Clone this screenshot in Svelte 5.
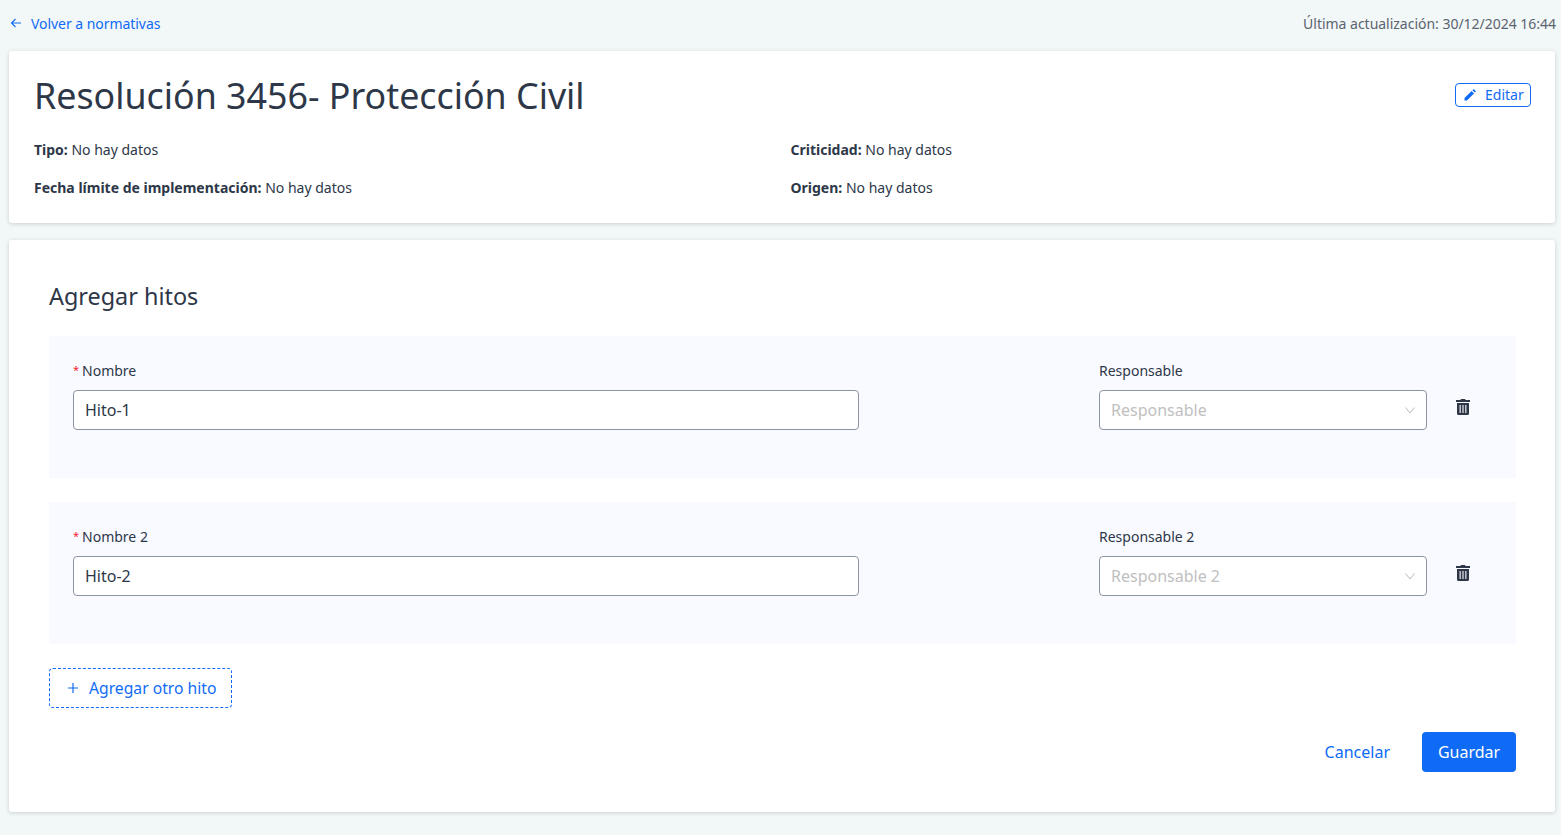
<script>
  // Milestones shown in the form
  let hitos = [
    { nombre: 'Nombre', valor: 'Hito-1', responsable: 'Responsable' },
    { nombre: 'Nombre 2', valor: 'Hito-2', responsable: 'Responsable 2' }
  ];
</script>

<div class="page">
  <div class="topbar">
    <a class="back" href="#top">
      <svg width="12" height="12" viewBox="0 0 12 12" fill="none" stroke="currentColor" stroke-width="1.1">
        <path d="M11 6H1.5M5.5 2L1.5 6l4 4" />
      </svg>
      <span>Volver a normativas</span>
    </a>
    <span class="updated">Última actualización: 30/12/2024 16:44</span>
  </div>

  <section class="card summary">
    <div class="head">
      <h1>Resolución 3456- Protección Civil</h1>
      <button class="edit">
        <svg width="12" height="12" viewBox="0 0 12 12" fill="currentColor">
          <path d="M0.5 11.5V9.1L7.6 2l2.4 2.4-7.1 7.1H.5zM8.4 1.2l.7-.7a.8.8 0 0 1 1.1 0l1.3 1.3a.8.8 0 0 1 0 1.1l-.7.7-2.4-2.4z" />
        </svg>
        Editar
      </button>
    </div>
    <div class="facts">
      <p><b>Tipo:</b> No hay datos</p>
      <p><b>Criticidad:</b> No hay datos</p>
      <p><b>Fecha límite de implementación:</b> No hay datos</p>
      <p><b>Origen:</b> No hay datos</p>
    </div>
  </section>

  <section class="card form">
    <h2>Agregar hitos</h2>

    {#each hitos as hito}
      <div class="hito">
        <div class="field">
          <label for={hito.valor}><span class="req">*</span>{hito.nombre}</label>
          <input id={hito.valor} type="text" value={hito.valor} />
        </div>
        <div class="field">
          <span class="label">{hito.responsable}</span>
          <div class="select">
            <span>{hito.responsable}</span>
            <svg width="10" height="10" viewBox="0 0 10 10" fill="none" stroke="#b4b8bf" stroke-width="1">
              <path d="M.5 2.5L5 8l4.5-5.5" />
            </svg>
          </div>
        </div>
        <button class="trash" aria-label="Eliminar">
          <svg width="14" height="16" viewBox="0 0 14 16" fill="#2d3748">
            <path d="M5 0h4l.6 1H14v2H0V1h4.4L5 0z" />
            <path fill-rule="evenodd" d="M1 4h12v10.5A1.5 1.5 0 0 1 11.5 16h-9A1.5 1.5 0 0 1 1 14.5V4zm2.6 2v8h1.1V6H3.6zm2.85 0v8h1.1V6h-1.1zm2.85 0v8h1.1V6H9.3z" />
          </svg>
        </button>
      </div>
    {/each}

    <button class="add">
      <svg width="12" height="12" viewBox="0 0 12 12" stroke="currentColor" stroke-width="1.2">
        <path d="M6 1v10M1 6h10" />
      </svg>
      Agregar otro hito
    </button>

    <div class="actions">
      <button class="cancel">Cancelar</button>
      <button class="save">Guardar</button>
    </div>
  </section>
</div>

<style>
  :global(body) {
    background: #f2f7f7;
    font-family: "Noto Sans", "Open Sans", sans-serif;
    color: #2d3748;
  }
  .page {
    padding: 0 6px 23px 9px;
    height: 835px;
    box-sizing: border-box;
  }
  .topbar {
    display: flex;
    justify-content: space-between;
    align-items: center;
    height: 51px;
    padding-bottom: 5px;
    box-sizing: border-box;
    font-size: 14px;
  }
  .back {
    display: flex;
    align-items: center;
    gap: 9px;
    padding-left: 1px;
    color: #0f6bf5;
    text-decoration: none;
    letter-spacing: -0.05px;
  }
  .updated {
    color: #5b6470;
    letter-spacing: -0.02px;
    margin-right: -1px;
  }
  .card {
    background: #fff;
    border-radius: 3px;
    box-shadow: 0 1px 4px rgba(45, 55, 72, 0.2);
  }
  .summary {
    height: 172px;
    padding: 0 24px 0 25px;
    box-sizing: border-box;
    margin-bottom: 17px;
  }
  .head {
    display: flex;
    justify-content: space-between;
    align-items: flex-start;
    height: 80px;
  }
  h1 {
    margin: 16px 0 0;
    font-size: 35.8px;
    font-weight: 400;
    line-height: 56px;
  }
  .edit {
    display: flex;
    align-items: center;
    gap: 9px;
    margin-top: 32px;
    width: 76px;
    height: 24px;
    padding: 0 0 2px 8px;
    background: #fff;
    border: 1px solid #0f6bf5;
    border-radius: 4px;
    color: #0f6bf5;
    font: inherit;
    font-size: 14px;
    box-sizing: border-box;
  }
  .edit svg {
    margin-top: 2px;
  }
  .facts {
    display: grid;
    grid-template-columns: 756.5px 1fr;
    row-gap: 18px;
    margin-top: 9px;
    font-size: 14px;
    line-height: 20px;
  }
  .facts p {
    margin: 0;
  }
  .form {
    height: 572px;
    padding: 39px 39px 0 40px;
    box-sizing: border-box;
  }
  h2 {
    margin: 0 0 23px;
    font-size: 23.4px;
    font-weight: 400;
    line-height: 34px;
  }
  .hito {
    display: grid;
    grid-template-columns: 1026px 328px 72px;
    height: 142px;
    padding: 24px;
    box-sizing: border-box;
    background: #f9faff;
    margin-bottom: 24px;
  }
  .hito .field:first-child {
    width: 786px;
  }
  label, .label {
    display: block;
    height: 22px;
    margin-bottom: 8px;
    font-size: 14px;
    line-height: 22px;
  }
  .req {
    color: #f5222d;
    margin-right: 3px;
    font-size: 11px;
    vertical-align: 2px;
    line-height: 1;
  }
  input, .select {
    display: flex;
    align-items: center;
    width: 100%;
    height: 40px;
    padding: 0 11px;
    box-sizing: border-box;
    background: #fff;
    border: 1px solid #8a94a3;
    border-radius: 4px;
    font: inherit;
    font-size: 16px;
    color: #2d3748;
  }
  .select {
    justify-content: space-between;
    color: #bfbfbf;
  }
  .trash {
    align-self: start;
    margin-top: 38px;
    padding: 0;
    height: 20px;
    background: none;
    border: none;
  }
  .add {
    display: flex;
    align-items: center;
    gap: 10px;
    width: 183px;
    height: 40px;
    padding: 0 0 0 17px;
    background: #fff;
    border: 1px dashed #0f6bf5;
    border-radius: 4px;
    color: #0f6bf5;
    font: inherit;
    font-size: 15.7px;
    box-sizing: border-box;
  }
  .actions {
    display: flex;
    justify-content: flex-end;
    align-items: center;
    gap: 32px;
    margin-top: 24px;
  }
  .cancel {
    padding: 0;
    background: none;
    border: none;
    color: #0f6bf5;
    font: inherit;
    font-size: 16px;
  }
  .save {
    width: 94px;
    height: 40px;
    background: #0f6bf5;
    border: none;
    border-radius: 4px;
    color: #fff;
    font: inherit;
    font-size: 16px;
  }
</style>
